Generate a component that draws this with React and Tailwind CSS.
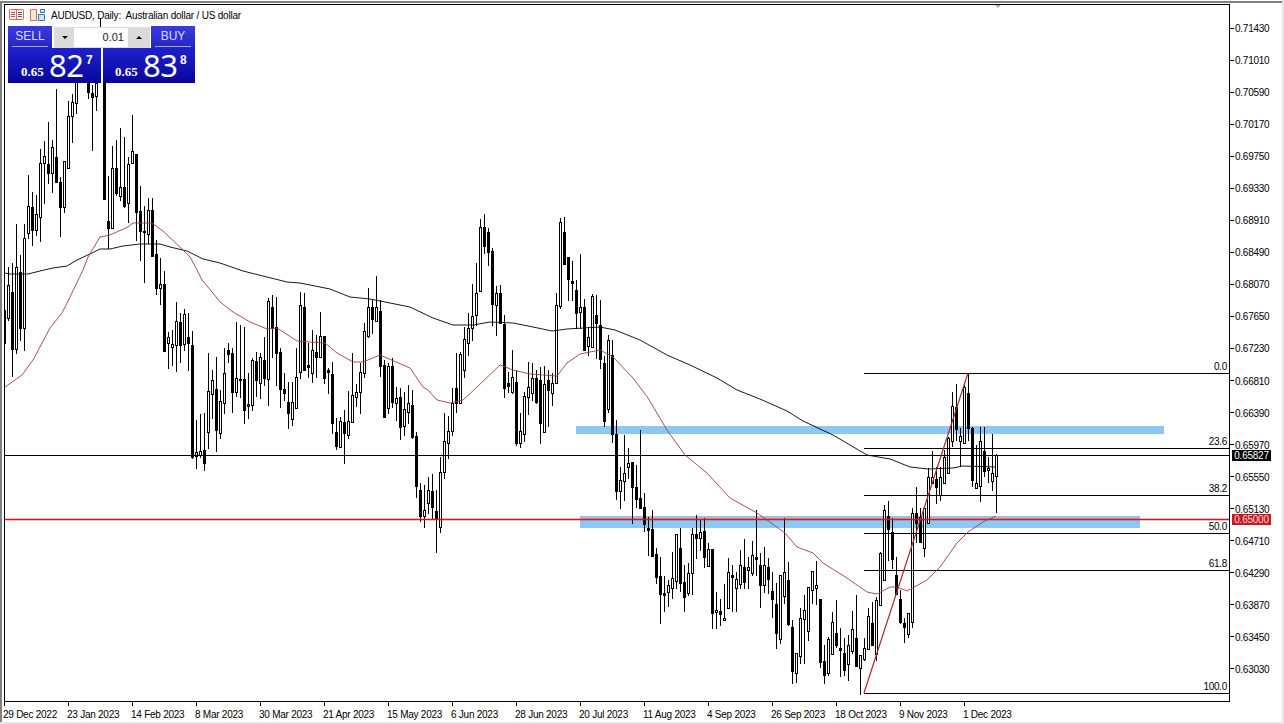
const prices = [
  "0.71430", "0.71010", "0.70590", "0.70170", "0.69750", "0.69330", "0.68910",
  "0.68490", "0.68070", "0.67650", "0.67230", "0.66810", "0.66390", "0.65970",
  "0.65550", "0.65130", "0.64710", "0.64290", "0.63870", "0.63450", "0.63030",
];

const dates = [
  "29 Dec 2022", "23 Jan 2023", "14 Feb 2023", "8 Mar 2023", "30 Mar 2023", "21 Apr 2023",
  "15 May 2023", "6 Jun 2023", "28 Jun 2023", "20 Jul 2023", "11 Aug 2023", "4 Sep 2023",
  "26 Sep 2023", "18 Oct 2023", "9 Nov 2023", "1 Dec 2023",
];

// high, body top, body bottom, low, bull (x = 4 + 4 * index)
const candles = [
  [270,310,343,378,0],[267,285,318,320,1],[263,292,349,376,0],[224,267,349,353,1],[255,272,328,340,0],
  [224,238,328,350,1],[175,206,233,238,1],[192,207,230,245,0],[195,214,230,235,1],[149,163,217,241,1],
  [141,156,163,203,1],[122,164,173,183,0],[140,147,173,192,1],[89,157,182,182,0],[177,182,207,236,0],
  [161,161,207,212,1],[101,116,168,168,1],[94,102,116,142,1],[70,80,103,113,1],[45,50,65,70,0],
  [40,48,62,70,1],[60,83,92,98,0],[85,93,97,150,0],[70,83,96,110,1],[18,30,60,70,0],
  [60,60,199,199,0],[176,221,228,248,0],[146,168,228,228,1],[140,168,193,195,0],[128,187,196,200,1],
  [137,187,206,207,0],[157,164,203,222,1],[115,151,163,163,1],[154,154,212,240,0],[186,211,231,260,0],
  [206,231,232,282,0],[198,210,234,243,1],[198,210,256,256,0],[240,254,288,294,0],[258,284,288,304,1],
  [271,284,351,351,0],[332,337,343,368,1],[330,344,347,365,1],[302,321,345,371,1],[313,322,345,362,0],
  [309,314,344,350,1],[313,337,343,370,0],[331,345,457,458,0],[420,452,456,468,1],[414,451,455,457,1],
  [413,450,463,470,0],[353,391,432,448,1],[370,380,394,418,1],[357,389,430,451,0],[390,401,433,438,1],
  [348,373,403,413,1],[343,350,354,362,0],[348,353,392,412,0],[322,378,392,396,1],[325,379,380,397,0],
  [327,379,410,423,0],[373,404,406,418,0],[358,360,405,410,1],[352,361,380,396,0],[353,357,383,398,1],
  [337,360,378,385,0],[298,301,379,405,1],[295,307,328,357,0],[297,327,353,385,0],[348,352,389,407,0],
  [373,389,393,400,0],[382,402,413,428,0],[382,402,419,425,1],[348,377,408,408,1],[292,305,372,378,1],
  [293,307,370,370,0],[343,365,367,377,0],[330,350,373,382,1],[335,352,357,377,0],[312,336,357,357,1],
  [336,336,378,383,0],[368,370,372,393,0],[362,374,423,433,0],[418,432,446,449,0],[417,421,447,447,1],
  [410,422,433,463,0],[391,421,435,438,1],[353,395,422,422,1],[384,392,397,406,1],[363,372,392,413,1],
  [323,331,373,377,1],[288,307,336,337,1],[300,307,319,333,0],[276,307,321,321,1],[300,311,366,376,0],
  [360,365,417,417,0],[363,366,408,413,1],[358,366,402,407,0],[387,398,403,420,1],[388,397,427,439,0],
  [392,409,426,435,1],[385,403,412,423,1],[390,405,437,438,0],[432,436,486,497,0],[483,490,516,521,0],
  [485,510,516,527,1],[477,490,503,513,1],[474,491,507,518,0],[490,511,518,552,0],[457,472,527,532,1],
  [413,441,472,478,1],[416,431,443,458,1],[388,403,431,435,1],[353,388,403,412,0],[352,354,403,403,1],
  [327,339,370,377,1],[313,328,343,355,1],[284,316,328,340,1],[263,293,315,325,1],[219,227,291,291,1],
  [214,227,246,253,0],[228,232,252,265,0],[248,251,304,325,0],[286,293,305,335,1],[285,293,323,323,0],
  [315,324,388,397,0],[372,383,386,392,0],[350,377,392,393,1],[370,382,443,445,0],[413,431,443,447,1],
  [392,396,434,441,1],[362,387,397,414,1],[363,378,393,400,1],[370,378,402,403,0],[367,380,423,443,0],
  [366,384,432,432,1],[370,380,390,426,0],[373,383,393,405,1],[293,305,383,383,1],[218,222,306,308,1],
  [217,232,264,264,0],[257,257,279,300,0],[261,281,283,300,0],[280,290,313,328,0],[254,307,312,328,1],
  [299,307,350,350,0],[327,337,346,355,1],[294,296,347,347,1],[295,315,323,358,0],[300,325,359,368,0],
  [356,363,421,426,0],[335,340,409,412,1],[340,355,434,442,0],[420,434,491,499,0],[467,480,491,508,1],
  [435,473,481,500,1],[448,463,467,478,1],[462,462,487,523,0],[465,487,499,507,0],[430,498,508,508,0],
  [493,507,524,531,0],[517,528,530,555,0],[510,529,556,556,0],[548,554,577,583,0],[557,576,594,623,0],
  [576,593,595,611,0],[580,585,592,606,1],[552,578,588,598,1],[534,534,581,588,1],[528,548,583,591,0],
  [565,582,597,611,0],[563,573,593,595,1],[528,534,573,594,1],[515,534,538,558,0],[520,532,538,550,1],
  [518,531,557,567,0],[543,549,566,566,1],[549,549,613,628,0],[592,610,612,628,1],[599,611,614,625,0],
  [584,618,620,620,1],[558,572,608,608,1],[565,575,577,611,0],[572,579,588,611,1],[550,565,584,588,1],
  [539,567,582,588,0],[557,567,570,588,1],[541,555,573,575,1],[510,557,559,575,0],[553,565,585,607,0],
  [547,565,585,592,1],[558,567,579,593,0],[572,591,599,617,0],[583,604,633,648,0],[575,575,639,643,1],
  [518,572,596,603,1],[562,580,624,625,0],[620,627,671,683,0],[653,653,673,682,1],[608,618,656,663,1],
  [595,610,619,663,1],[587,587,631,640,1],[571,571,590,603,1],[561,585,588,604,1],[599,599,662,667,0],
  [645,661,675,683,0],[637,639,673,675,1],[612,622,654,654,1],[600,633,645,647,0],[628,648,650,676,0],
  [638,653,670,675,0],[635,645,664,680,1],[611,629,651,653,1],[595,638,666,666,0],[655,655,668,694,1],
  [638,648,659,660,1],[608,616,649,649,1],[602,623,645,645,0],[597,600,654,660,1],[552,553,605,605,1],
  [505,510,580,580,1],[501,516,529,560,0],[518,532,559,568,0],[557,575,594,594,0],[590,599,622,623,0],
  [618,623,627,642,0],[613,613,634,637,1],[508,513,622,627,1],[487,513,523,542,0],[508,517,542,542,0],
  [508,508,548,556,1],[468,477,523,523,1],[451,477,483,483,1],[467,479,487,503,0],[467,477,495,500,1],
  [450,457,483,483,1],[437,438,473,473,1],[392,406,441,446,1],[384,407,429,440,0],[428,436,441,466,1],
  [385,387,443,443,1],[373,393,428,440,0],[427,428,480,486,0],[445,483,488,488,1],[427,441,486,501,1],
  [427,451,471,476,0],[457,468,470,482,1],[434,473,481,490,1],[454,455,476,512,1],
];

const blackMa = "5,273 10,274 28,274 40,271 53,268 67,266 77,260 90,254 100,249 110,249 123,246 140,244 160,244 170,247 187,251 203,259 220,263 243,271 267,277 287,282 300,283 330,289 350,297 370,299 410,307 433,318 453,325 473,325 490,322 513,323 533,327 552,331 567,329 600,327 615,330 640,340 667,355 690,365 717,378 737,390 760,399 787,411 803,421 833,435 867,455 890,459 910,467 928,469 953,468 963,466 996,467";

const redMa = "5,387 22,375 33,360 50,328 62,313 70,297 83,270 88,257 100,237 110,235 128,227 133,223 152,223 163,231 183,250 190,257 197,270 202,280 213,293 220,302 233,312 250,322 267,329 277,328 297,341 310,342 325,343 337,353 353,362 363,362 380,355 410,368 423,387 428,390 437,400 450,403 463,400 477,387 500,365 513,370 530,374 557,376 567,363 580,354 600,350 613,357 633,378 648,398 667,430 685,455 707,473 730,498 757,513 767,520 785,533 797,547 813,553 823,563 847,578 867,592 877,594 890,587 897,587 907,591 927,580 940,567 957,543 968,532 983,522 996,516";

const fibs = [
  { y: 373, label: "0.0" },
  { y: 448, label: "23.6" },
  { y: 495, label: "38.2" },
  { y: 533, label: "50.0" },
  { y: 570, label: "61.8" },
  { y: 693, label: "100.0" },
];

const Candle = ({ c, x }) => {
  const [hi, top, bot, lo, bull] = c;
  return (
    <g>
      <rect x={x} y={hi} width="1" height={lo - hi + 1} fill="#000" />
      <rect x={x - 1} y={top} width="3" height={bot - top + 1} fill="#000" />
      {bull === 1 && bot - top > 1 && (
        <rect x={x} y={top + 1} width="1" height={bot - top - 1} fill="#fff" />
      )}
    </g>
  );
};

const Chart = () => (
  <svg viewBox="5 5 1224 696" className="block w-[1224px] h-[696px]" shapeRendering="crispEdges">
    <rect x="576" y="426" width="588" height="8" fill="#8cc8f4" />
    <rect x="580" y="516" width="560" height="12" fill="#8cc8f4" />
    <rect x="580" y="516" width="560" height="3" fill="#a9b8da" />

    {candles.map((c, i) => (
      <Candle key={i} c={c} x={4 + 4 * i} />
    ))}

    <rect x="5" y="455" width="1224" height="1" fill="#000" />
    <rect x="5" y="518" width="1224" height="3" fill="#e02020" opacity="0.3" />
    <rect x="5" y="519" width="1224" height="1" fill="#c42020" />

    {fibs.map((f) => (
      <g key={f.y}>
        <rect x="864" y={f.y} width="365" height="1" fill="#000" />
        <text x="1227" y={f.y - 3} textAnchor="end" fontSize="10" letterSpacing="-0.3" fontFamily="'Liberation Sans', sans-serif" fill="#000" shapeRendering="auto">
          {f.label}
        </text>
      </g>
    ))}

    <g shapeRendering="auto" fill="none">
      <polyline points={blackMa} stroke="#000" strokeWidth="0.9" />
      <polyline points={redMa} stroke="#a83a3a" strokeWidth="0.9" />
      <line x1="864" y1="693" x2="968" y2="373" stroke="#a82c2c" strokeWidth="1.2" />
    </g>
  </svg>
);

const PriceBox = ({ big, small, first }) => (
  <div className={`${first ? "w-[93px]" : "w-[92px]"} h-[35px] bg-gradient-to-b from-[#2020cc] to-[#06069c] flex items-start text-white font-['Liberation_Sans',sans-serif]`}>
    <span className={`${first ? "ml-[13px]" : "ml-[12px]"} mt-[15px] w-[28px] text-[13px] leading-[18px] font-bold font-['Liberation_Serif',serif]`}>0.65</span>
    <span className="text-[31px] leading-[36px] w-[33px] tracking-[-0.5px] -mt-[1px] font-['Noto_Sans',sans-serif]">{big}</span>
    <span className="ml-[4px] mt-[5px] text-[12px] leading-[14px] font-bold">{small}</span>
  </div>
);

const TradePanel = () => (
  <div className="absolute left-[3px] top-[21px] w-[187px] flex flex-col font-['Liberation_Sans',sans-serif]">
    <div className="flex items-stretch h-[22px]">
      <div className="w-[44px] bg-gradient-to-b from-[#3a3ae0] to-[#2626c4] px-[4px] pt-[3px]">
        <div className="h-[18px] text-center text-[12px] leading-[14px] text-[#dcdcff] border-b border-[#a0a0f0]">SELL</div>
      </div>
      <div className="ml-[2px] w-[96px] h-[21px] mt-px flex bg-white border border-[#dcdcdc]">
        <div className="w-[19px] bg-[#dadada] flex items-center justify-center">
          <div className="w-0 h-0 border-x-[3px] border-x-transparent border-t-[3px] border-t-black" />
        </div>
        <div className="flex-1 text-right pr-[4px] text-[11px] leading-[19px] text-[#222]">0.01</div>
        <div className="w-[21px] bg-[#dadada] flex items-center justify-center">
          <div className="w-0 h-0 border-x-[3px] border-x-transparent border-b-[3px] border-b-black" />
        </div>
      </div>
      <div className="ml-[1px] w-[44px] bg-gradient-to-b from-[#3a3ae0] to-[#2626c4] px-[4px] pt-[3px]">
        <div className="h-[18px] text-center text-[12px] leading-[14px] text-[#dcdcff] border-b border-[#a0a0f0]">BUY</div>
      </div>
    </div>
    <div className="flex gap-[2px] bg-white">
      <PriceBox big="82" small="7" first />
      <PriceBox big="83" small="8" />
    </div>
  </div>
);

const ChartIcons = () => (
  <div className="flex gap-[6px]">
    <svg width="15" height="11" viewBox="0 0 15 11" fill="none">
      <rect x="0.5" y="0.5" width="14" height="10" rx="1" fill="#fdece6" stroke="#dc6a52" />
      <path d="M7.5 1v9" stroke="#dc6a52" />
      <path d="M2 3.5h4M2 5.5h4M2 7.5h4" stroke="#b0564a" />
      <path d="M9 3.5h4M9 5.5h4M9 7.5h4" stroke="#3c5f94" />
    </svg>
    <svg width="15" height="12" viewBox="0 0 15 12" fill="none">
      <path d="M0.5 0.5h6v11h-6z" fill="#fde6de" stroke="#dc6a52" />
      <path d="M8.5 5.5h6v6h-6z" fill="#d2e6f8" stroke="#2f78b8" />
      <path d="M10.5 0.5h4v3h-4z" fill="#d2e6f8" stroke="#2f78b8" />
    </svg>
  </div>
);

const App = () => {
  return (
    <div className="w-[1284px] h-[724px] bg-white overflow-hidden flex flex-col border-r-2 border-b-2 border-[#e6e6e6] font-['Liberation_Sans',sans-serif] text-black">
      <div className="mt-px flex-1 border-t-2 border-l-2 border-[#808080] pl-[2px] pt-px flex flex-col">
        <div className="flex">
          <div className="relative w-[1226px] h-[698px] border border-black overflow-hidden bg-white">
            <Chart />
            <div className="absolute left-[4px] top-[4px] flex items-center gap-[6px] h-[12px]">
              <ChartIcons />
              <span className="mt-px text-[10px] tracking-[-0.2px] leading-[12px] whitespace-pre">AUDUSD, Daily:  Australian dollar / US dollar</span>
            </div>
            <TradePanel />
            <div className="absolute left-[989px] -top-px w-0 h-0 border-x-[4px] border-x-transparent border-t-[4px] border-t-[#b0b0b0]" />
          </div>

          <div className="relative flex-1 pt-[8px]">
            {prices.map((p) => (
              <div key={p} className="h-[32.05px] flex items-center">
                <div className="w-[4px] h-px bg-black" />
                <span className="ml-px mt-[2px] text-[10px] tracking-[-0.25px] leading-[12px]">{p}</span>
              </div>
            ))}
            <div className="absolute left-[2px] top-[446px] w-[39px] h-[11px] bg-black text-white text-[10px] tracking-[-0.25px] leading-[11px] text-center">0.65827</div>
            <div className="absolute left-[2px] top-[510px] w-[39px] h-[11px] bg-[#c8191e] text-[#f4d8d8] text-[10px] tracking-[-0.25px] leading-[11px] text-center">0.65000</div>
          </div>
        </div>

        <div className="flex">
          {dates.map((d) => (
            <div key={d} className="w-[64px] shrink-0">
              <div className="w-px h-[4px] bg-black" />
              <div className="-ml-[1px] mt-[3px] text-[10px] tracking-[-0.25px] leading-[12px] whitespace-nowrap">{d}</div>
            </div>
          ))}
        </div>
      </div>
    </div>
  );
};

export default App;
